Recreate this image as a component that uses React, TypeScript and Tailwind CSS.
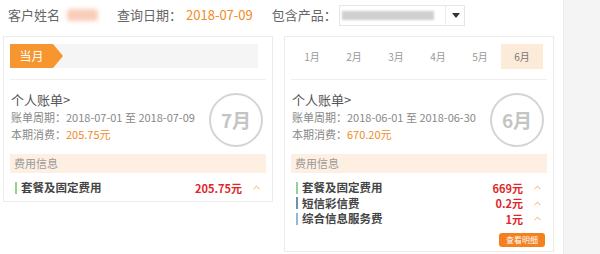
import { ChevronUp } from "lucide-react";

const FONT = { fontFamily: '"Microsoft YaHei", "Noto Sans CJK SC", "Liberation Sans", sans-serif' };

const MONTHS = ["1月", "2月", "3月", "4月", "5月", "6月"];

type Fee = { name: string; amount: string; bar: string };

function BillSummary({ period, total, month }: { period: string; total: string; month: string }) {
  return (
    <div className="flex h-[74px] items-center justify-between pl-[1px] pr-[3px]">
      <div className="flex flex-col">
        <div className="text-[13px] leading-[17px] text-[#555]">个人账单&gt;</div>
        <div className="mt-[1px] text-[11px] leading-[17px] text-[#888]">账单周期：{period}</div>
        <div className="text-[11px] leading-[17px] text-[#888]">
          本期消费：<span className="text-[#f08a24]">{total}</span>
        </div>
      </div>
      <div className="mt-[6px] flex h-[54px] w-[54px] items-center justify-center rounded-full border-2 border-[#d4d4d4]">
        <span className="text-[19px] font-bold text-[#c4c4c4]">{month}</span>
      </div>
    </div>
  );
}

function FeeRows({ fees }: { fees: Fee[] }) {
  return (
    <div className="flex flex-col pt-[7px]">
      {fees.map((f) => (
        <div key={f.name} className="flex h-[15.5px] items-center pl-[5px] pr-[4px]">
          <div className={`h-[12px] w-[2px] ${f.bar}`} />
          <span className="ml-[4px] text-[11.5px] font-bold text-[#444]">{f.name}</span>
          <span className="ml-auto text-[11px] font-bold text-[#e0262b]">{f.amount}</span>
          <ChevronUp className="ml-[9px] h-[11px] w-[11px] text-[#f5a54f]" strokeWidth={2} />
        </div>
      ))}
    </div>
  );
}

export default function App() {
  return (
    <div className="flex h-[254px] w-[600px] overflow-hidden bg-white" style={FONT}>
      <div className="flex w-[563px] flex-col">
        {/* query bar */}
        <div className="flex h-[30px] items-center pl-[8px] text-[13px] text-[#666]">
          <span>客户姓名</span>
          <span className="ml-[7px] h-[12px] w-[31px] rounded-sm bg-[#f8cdb8] blur-[2px]" />
          <span className="ml-[19px]">查询日期：</span>
          <span className="ml-[4px] text-[#f08a24]">2018-07-09</span>
          <span className="ml-[19px]">包含产品：</span>
          <div className="ml-[2px] flex h-[21px] w-[126px] items-center border border-[#e6e6e6]">
            <span className="ml-[2px] h-[9px] w-[92px] bg-[#cfcfcf] blur-[1px]" />
            <span className="ml-[11px] h-[19px] w-px bg-[#ececec]" />
            <span className="ml-[6px] h-0 w-0 border-x-[4px] border-t-[5px] border-x-transparent border-t-[#333]" />
          </div>
        </div>

        <div className="mt-[6px] flex items-start gap-[11px] pl-[3px]">
          {/* current month */}
          <div className="w-[270px] border border-[#ebebeb] px-[6px] pb-[5px] pt-[7px]">
            <div className="flex h-[24px] w-[248px] items-center bg-[#f5f5f5]">
              <div className="relative flex h-[24px] w-[43px] items-center justify-center bg-[#f7952f] text-[12px] text-white">
                当月
                <span className="absolute -right-[10px] top-0 h-0 w-0 border-y-[12px] border-l-[10px] border-y-transparent border-l-[#f7952f]" />
              </div>
            </div>
            <div className="mt-[11px] border-t border-[#efefef]" />
            <BillSummary period="2018-07-01 至 2018-07-09" total="205.75元" month="7月" />
            <div className="flex h-[19px] items-center bg-[#fdf0e2] pl-[4px] text-[11px] text-[#999]">费用信息</div>
            <FeeRows fees={[{ name: "套餐及固定费用", amount: "205.75元", bar: "bg-[#8fd48f]" }]} />
          </div>

          {/* history */}
          <div className="w-[270px] border border-[#ebebeb] px-[6px] pb-[4px] pt-[7px]">
            <div className="flex h-[25px]">
              {MONTHS.map((m) => (
                <div
                  key={m}
                  className={`flex w-[42px] items-center justify-center text-[10px] ${
                    m === "6月" ? "bg-[#fcebd9] text-[#777]" : "text-[#999]"
                  }`}
                >
                  {m}
                </div>
              ))}
            </div>
            <div className="mt-[10px] border-t border-[#efefef]" />
            <BillSummary period="2018-06-01 至 2018-06-30" total="670.20元" month="6月" />
            <div className="flex h-[19px] items-center bg-[#fdf0e2] pl-[4px] text-[11px] text-[#999]">费用信息</div>
            <FeeRows
              fees={[
                { name: "套餐及固定费用", amount: "669元", bar: "bg-[#8fd48f]" },
                { name: "短信彩信费", amount: "0.2元", bar: "bg-[#6f8fb3]" },
                { name: "综合信息服务费", amount: "1元", bar: "bg-[#8fb8e3]" },
              ]}
            />
            <div className="mt-[6px] flex justify-end pr-[2px]">
              <button className="h-[14px] w-[46px] rounded-[3px] bg-[#f5801e] text-[8px] leading-[14px] text-white">
                查看明细
              </button>
            </div>
          </div>
        </div>
      </div>
      <div className="flex-1 border-l border-[#ececec] bg-[#f4f4f4]" />
    </div>
  );
}
